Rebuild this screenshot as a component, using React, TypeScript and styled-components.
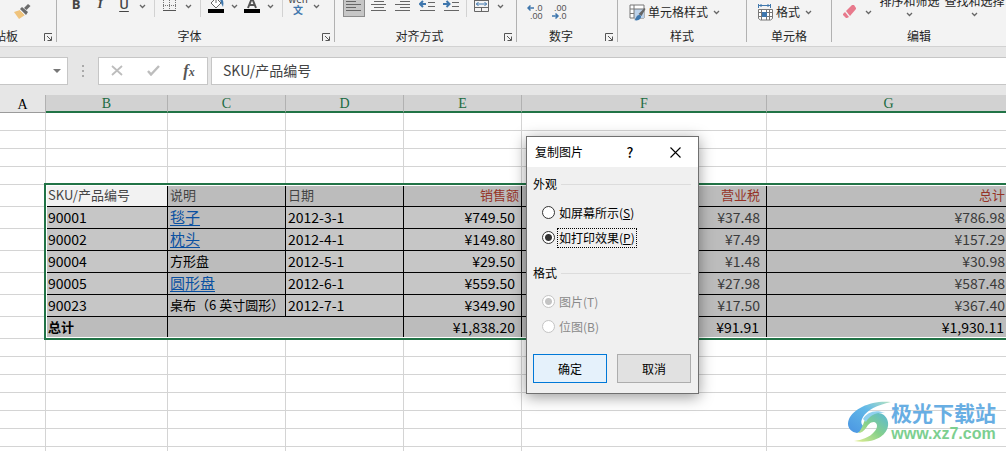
import React from "react";
import styled, { createGlobalStyle, css } from "styled-components";

const Global = createGlobalStyle`
  *, *::before, *::after { box-sizing: border-box; }
  body { margin: 0; background: #fff; overflow: hidden; }
  body, button, input { font-family: "Noto Sans CJK SC", sans-serif; font-size: 12px; color: #262626; }
`;

const Page = styled.main`
  position: relative;
  display: flex;
  flex-direction: column;
  height: 100vh;
  overflow: hidden;
`;

/* ---------- ribbon ---------- */

const Ribbon = styled.header`
  display: flex;
  height: 47px;
  overflow: hidden;
  background: #f3f3f3;
  border-bottom: 1px solid #d2d2d2;
`;

const Group = styled.section<{ $width?: number }>`
  display: flex;
  flex-direction: column;
  justify-content: flex-end;
  flex: ${(p) => (p.$width ? `0 0 ${p.$width}px` : "1 0 0")};
  min-width: 0;
  height: 42px;
  border-right: ${(p) => (p.$width ? "1px solid #b1b1b1" : "0")};
`;

const Controls = styled.div<{ $left: number; $bottom: number }>`
  display: flex;
  align-items: flex-end;
  height: 26px;
  padding-left: ${(p) => p.$left}px;
  padding-bottom: ${(p) => p.$bottom}px;
`;

const GroupFooter = styled.div`
  display: flex;
  align-items: flex-end;
  height: 16px;
`;

const GroupLabel = styled.span<{ $clipped?: boolean }>`
  flex: 1;
  height: 16px;
  line-height: 19px;
  white-space: nowrap;
  text-align: ${(p) => (p.$clipped ? "left" : "center")};
  margin-left: ${(p) => (p.$clipped ? "-18px" : "0")};
`;

const plainButton = css`
  border: 0;
  padding: 0;
  background: transparent;
`;

const LauncherButton = styled.button`
  ${plainButton}
  display: flex;
  align-items: flex-end;
  justify-content: flex-start;
  width: 12px;
  height: 16px;
`;

const Tool = styled.button<{ $pressed?: boolean }>`
  ${plainButton}
  display: flex;
  align-items: center;
  justify-content: center;
  flex: none;
  width: 24px;
  height: 22px;
  ${(p) =>
    p.$pressed &&
    css`
      width: 22px;
      margin-right: 2px;
      background: #c6c6c6;
      border: 1px solid #8c8c8c;
    `}
`;

const TextTool = styled.button`
  ${plainButton}
  display: flex;
  align-items: center;
  gap: 2px;
  height: 22px;
  margin-right: 2px;
  line-height: 22px;
  white-space: nowrap;
`;

const StackTools = styled.div`
  display: flex;
  margin-left: 3px;
  padding-bottom: 6px;
`;

const StackTool = styled.button`
  ${plainButton}
  display: flex;
  flex-direction: column;
  align-items: center;
  gap: 3px;
  flex: none;
  width: 65px;
  line-height: 16px;
  white-space: nowrap;
`;

const Drop = styled.button`
  ${plainButton}
  display: flex;
  align-items: center;
  justify-content: center;
  flex: none;
  width: 12px;
  height: 22px;
`;

const Divider = styled.span<{ $tight?: boolean }>`
  flex: none;
  width: 1px;
  height: 22px;
  margin: 0 3px 0 ${(p) => (p.$tight ? 3 : 6)}px;
  background: #d2d2d2;
`;

const Letter = styled.span<{ $kind?: "bold" | "italic" | "underline" }>`
  font-family: "Open Sans", sans-serif;
  font-size: 13px;
  line-height: 16px;
  font-weight: 700;
  color: #444;
  padding-bottom: 4px;
  ${(p) => p.$kind === "italic" && 'font-family: "Liberation Serif", serif; font-style: italic;'}
  ${(p) => p.$kind === "underline" && "font-weight: 600; text-decoration: underline; text-underline-offset: 2px;"}
`;

const Chevron = () => (
  <svg width="7" height="5" viewBox="0 0 7 5" aria-hidden="true">
    <path d="M1 1l2.5 2.5L6 1" fill="none" stroke="#666" strokeWidth="1.3" />
  </svg>
);

const Launcher = ({ label }: { label: string }) => (
  <LauncherButton aria-label={label}>
    <svg width="9" height="9" viewBox="0 0 9 9" aria-hidden="true">
      <path d="M.5 8V.5H8M3 3l4 4M7.5 3.5v4h-4" fill="none" stroke="#555" />
    </svg>
  </LauncherButton>
);

const BrushIcon = () => (
  <svg width="17" height="15" viewBox="0 0 17 15" aria-hidden="true">
    <path d="M0 8l6-2 5 5-6 4z" fill="#efc37c" />
    <path d="M6 5l2-2 6 5-2 3z" fill="#6b6b6b" />
    <path d="M10 4l4-4 2.5 2-4 4z" fill="#6b6b6b" />
    <path d="M6 6l5 5" stroke="#f3f3f3" />
  </svg>
);

const BorderIcon = () => (
  <svg width="14" height="16" viewBox="0 0 14 16" aria-hidden="true">
    <path d="M.5 0v13M6.5 0v13M12.5 0v13M0 1.5h13M0 7.5h13" stroke="#777" strokeDasharray="1 1" fill="none" />
    <path d="M0 12.5h13" stroke="#555" />
  </svg>
);

const FillIcon = () => (
  <svg width="17" height="18" viewBox="0 0 17 18" aria-hidden="true">
    <path d="M3 6l5-5 5 5-5 5z" fill="#fff" stroke="#666" />
    <path d="M8 6V0" stroke="#666" />
    <path d="M12 2c3 0 4 2 3 8l-2-4z" fill="#3f77ad" />
    <path d="M0 12h16v4H0z" fill="#000" />
  </svg>
);

const FontColorIcon = () => (
  <svg width="17" height="18" viewBox="0 0 17 18" aria-hidden="true">
    <path d="M4 11L8 1l4 10M5.5 8h5" fill="none" stroke="#555" strokeWidth="2" />
    <path d="M0 12h16v4H0z" fill="#000" />
  </svg>
);

const Phonetic = styled.span`
  display: flex;
  flex-direction: column;
  align-items: center;
  padding-bottom: 4px;
  font-size: 10px;
  line-height: 11px;
  color: #444;
  b {
    font-weight: 700;
    color: #3f77ad;
  }
`;

const LinesIcon = ({ xs }: { xs: number[] }) => (
  <svg width="16" height="16" viewBox="0 0 16 16" aria-hidden="true">
    {xs.map((x, i) => (
      <path key={i} d={`M${x} ${i * 3 + 0.5}h${i % 2 ? 10 : 15}`} stroke="#666" />
    ))}
  </svg>
);

const IndentIcon = ({ right }: { right?: boolean }) => (
  <svg width="17" height="16" viewBox="0 0 17 16" aria-hidden="true">
    <path d="M9 .5h7M9 4.500h7M9 8.500h7M1 12.500h15" stroke="#666" />
    <path
      d={right ? "M0 6h6M3.500 3l3 3-3 3" : "M1 6h6M4 3L1 6l3 3"}
      fill="none"
      stroke="#3f77ad"
      strokeWidth="2"
    />
  </svg>
);

const MergeIcon = () => (
  <svg width="16" height="16" viewBox="0 0 16 16" aria-hidden="true">
    <path d="M.5 0v13.500h14V0M0 9.500h15M7.500 9.500v4M0 2.500h15" fill="none" stroke="#666" />
    <path d="M2 6h11M4.500 4l-2 2 2 2M10.500 4l2 2-2 2" fill="none" stroke="#3f77ad" />
  </svg>
);

const DecimalIcon = ({ more }: { more?: boolean }) => (
  <svg width="16" height="16" viewBox="0 0 16 16" aria-hidden="true" fontFamily="Liberation Sans" fontSize="9" fill="#555">
    <text x={more ? 8 : 3} y="7">{more ? ".0" : ".00"}</text>
    <text x={more ? 3 : 8} y="15">{more ? ".00" : ".0"}</text>
    <path
      d={more ? "M1 4h6M3.500 1.500L1 4l2.500 2.500" : "M1 12h6M4.500 9.500L7 12l-2.500 2.500"}
      fill="none"
      stroke="#3f77ad"
      strokeWidth="1.500"
    />
  </svg>
);

const CellStyleIcon = () => (
  <svg width="17" height="17" viewBox="0 0 17 17" aria-hidden="true">
    <path d="M1 1h14v13H1z" fill="#fff" stroke="#777" />
    <path d="M5 5h10v9H5z" fill="#bcd2ea" />
    <path d="M1 5h14M5 1v13M1 9.500h4" stroke="#777" fill="none" />
    <path d="M15.500 4l1 1-4 7-3-2z" fill="#666" />
    <path d="M5 16c2 0 2-5 5-5 2 0 3 2 1 4-1 1-3 2-6 1z" fill="#3f77ad" />
  </svg>
);

const FormatIcon = () => (
  <svg width="17" height="17" viewBox="0 0 17 17" aria-hidden="true">
    <path d="M1.500 0v4M13.500 0v4M2 1.500h11M4.500 0L3 1.500 4.500 3M10.500 0L12 1.500 10.500 3" stroke="#3f77ad" fill="none" />
    <path d="M1.500 5.500h14v9l-2 1.500h-10l-2-1.500zM1 8.500h14M1 12.500h14M4.500 5v11M9.500 5v11M12.500 5v11" fill="#fff" stroke="#777" />
    <path d="M5 8h5v5H5z" fill="#3f77ad" />
  </svg>
);

const EraserIcon = () => (
  <svg width="14" height="14" viewBox="0 0 14 14" aria-hidden="true">
    <path d="M9 0h2l2 3v1L7 11 3 6z" fill="#e8798c" />
    <path d="M2 7l4 5-2 1H3L0 10V9z" fill="#e8798c" />
  </svg>
);

/* ---------- formula bar ---------- */

const FormulaBar = styled.div`
  display: flex;
  flex: none;
  height: 48px;
  padding: 10px 0;
  background: #e6e6e6;
`;

const NameBox = styled.div`
  display: flex;
  align-items: center;
  width: 68px;
  background: #fff;
  border: 1px solid #c6c6c6;
  border-left: 0;
`;

const NameInput = styled.input`
  flex: 1;
  min-width: 0;
  border: 0;
  background: transparent;
`;

const NameDrop = styled.button`
  ${plainButton}
  display: flex;
  align-items: center;
  justify-content: center;
  width: 20px;
  height: 24px;
`;

const Grip = styled.span`
  display: flex;
  align-items: center;
  justify-content: center;
  width: 30px;
`;

const FormulaActions = styled.div`
  display: flex;
  align-items: center;
  justify-content: space-around;
  width: 110px;
  margin-right: 3px;
  background: #fff;
  border: 1px solid #c6c6c6;
`;

const ActionButton = styled.button`
  ${plainButton}
  width: 36px;
  height: 24px;
  font-family: "Liberation Serif", serif;
  font-size: 16px;
  line-height: 24px;
  font-style: italic;
  font-weight: 700;
  color: #555;
  small {
    font-size: 12px;
  }
`;

const FormulaInput = styled.input`
  flex: 1;
  min-width: 0;
  padding: 0 11px 3px;
  font-size: 14px;
  color: #444;
  background: #fff;
  border: 1px solid #c6c6c6;
  border-right: 0;
  border-radius: 0;
  outline: 0;
`;

/* ---------- sheet ---------- */

const SheetArea = styled.div`
  position: relative;
  flex: 1;
  min-height: 0;
  overflow: hidden;
`;

const Sheet = styled.table`
  width: calc(100% + 5px);
  table-layout: fixed;
  border-collapse: separate;
  border-spacing: 0;
`;

const ColumnHead = styled.th<{ $selected?: boolean }>`
  height: 18px;
  padding: 2px 0 0;
  font-family: "Liberation Serif", serif;
  font-size: 14px;
  line-height: 14px;
  font-weight: 400;
  color: ${(p) => (p.$selected ? "#1a6b41" : "#000")};
  background: ${(p) => (p.$selected ? "#d2d2d2" : "#e6e6e6")};
  border-right: 1px solid #b1b1b1;
  border-bottom: ${(p) => (p.$selected ? "2px solid #217346" : "1px solid #9b9b9b")};
`;

const Blank = styled.td<{ $tall?: boolean }>`
  height: ${(p) => (p.$tall ? 22 : 18)}px;
  padding: 0;
  border-right: 1px solid #d4d4d4;
  border-bottom: 1px solid #d4d4d4;
`;

type Tone = "active" | "light" | "dark";
const tones: Record<Tone, string> = { active: "#f2f2f2", light: "#c6c6c6", dark: "#bcbcbc" };

const Data = styled.td<{ $tone: Tone; $right?: number; $ink?: string; $number?: boolean; $bold?: boolean }>`
  height: 22px;
  padding: 0 ${(p) => p.$right ?? 0}px 1px 2px;
  font-size: ${(p) => (p.$number ? 14 : 13)}px;
  line-height: 18px;
  vertical-align: middle;
  font-weight: ${(p) => (p.$bold ? 700 : 400)};
  text-align: ${(p) => (p.$right === undefined ? "left" : "right")};
  white-space: nowrap;
  color: ${(p) => p.$ink ?? "#000"};
  background: ${(p) => tones[p.$tone]};
  border-right: 1px solid #000;
  border-bottom: 1px solid #000;
`;

const CellLink = styled.a`
  display: block;
  font-size: 15px;
  line-height: 18px;
  color: #0a50a1;
  text-decoration: underline;
  text-underline-offset: 2px;
`;

const Selection = styled.div`
  position: absolute;
  top: 88px;
  left: 44px;
  right: -8px;
  height: 157px;
  border: 2px solid #217346;
  box-shadow: inset 0 0 0 1px #fff;
  pointer-events: none;
`;

const columns = ["A", "B", "C", "D", "E", "F", "G"];
const widths = [46, 122, 118, 118, 118, 245];

const items = [
  { sku: "90001", name: "毯子", link: true, date: "2012-3-1", sales: "¥749.50", tax: "¥37.48", total: "¥786.98" },
  { sku: "90002", name: "枕头", link: true, date: "2012-4-1", sales: "¥149.80", tax: "¥7.49", total: "¥157.29" },
  { sku: "90004", name: "方形盘", link: false, date: "2012-5-1", sales: "¥29.50", tax: "¥1.48", total: "¥30.98" },
  { sku: "90005", name: "圆形盘", link: true, date: "2012-6-1", sales: "¥559.50", tax: "¥27.98", total: "¥587.48" },
  { sku: "90023", name: "桌布（6 英寸圆形）", link: false, date: "2012-7-1", sales: "¥349.90", tax: "¥17.50", total: "¥367.40" },
];

const BlankRows = ({ count }: { count: number }) => (
  <>
    {Array.from({ length: count }, (_, r) => (
      <tr key={r}>
        {columns.map((c) => (
          <Blank key={c} />
        ))}
      </tr>
    ))}
  </>
);

/* ---------- dialog ---------- */

const Dialog = styled.form`
  position: absolute;
  top: 136px;
  left: 526px;
  width: 173px;
  background: #f0f0f0;
  border: 1px solid #707070;
  box-shadow: 0 3px 14px rgba(0, 0, 0, 0.4);
  color: #000;
`;

const TitleBar = styled.div`
  display: flex;
  align-items: center;
  height: 30px;
  padding: 0 8px;
  background: #fff;
`;

const Title = styled.h2`
  flex: 1;
  margin: 0;
  font-size: 12px;
  line-height: 16px;
  font-weight: 400;
`;

const TitleButton = styled.button`
  ${plainButton}
  display: flex;
  align-items: center;
  justify-content: center;
  width: 30px;
  height: 24px;
  margin-left: 15px;
  font-size: 14px;
  font-weight: 500;
  color: #000;
`;

const DialogBody = styled.div`
  padding: 9px 7px 10px 6px;
`;

const Field = styled.fieldset`
  min-width: 0;
  margin: 0 0 15px;
  padding: 0;
  border: 0;
`;

const Legend = styled.legend`
  display: flex;
  align-items: center;
  gap: 4px;
  width: 100%;
  height: 16px;
  margin-bottom: 8px;
  padding: 0;
  line-height: 16px;
  &::after {
    content: "";
    flex: 1;
    height: 1px;
    background: #dcdcdc;
  }
`;

const Option = styled.label<{ $disabled?: boolean }>`
  display: flex;
  align-items: center;
  height: 25px;
  padding-left: 9px;
  color: ${(p) => (p.$disabled ? "#8a8a8a" : "#000")};
`;

const OptionText = styled.span<{ $focused?: boolean }>`
  padding: 0 1px;
  line-height: 18px;
  border: 1px dotted ${(p) => (p.$focused ? "#000" : "transparent")};
`;

const Radio = styled.input.attrs({ type: "radio" })`
  appearance: none;
  width: 13px;
  height: 13px;
  margin: 0 2px 0 0;
  border: 1px solid #333;
  border-radius: 50%;
  background: #fff;
  &:checked {
    background: radial-gradient(circle, #333 0 3px, #fff 4px);
  }
  &:disabled {
    border-color: #c4c4c4;
  }
  &:disabled:checked {
    background: radial-gradient(circle, #c4c4c4 0 3px, #fff 4px);
  }
`;

const Actions = styled.div`
  display: flex;
  gap: 10px;
`;

const PushButton = styled.button<{ $primary?: boolean }>`
  flex: 1;
  height: 29px;
  padding: 0;
  color: #000;
  background: ${(p) => (p.$primary ? "#e5f1fb" : "#e1e1e1")};
  border: 1px solid ${(p) => (p.$primary ? "#0078d7" : "#adadad")};
`;

/* ---------- watermark ---------- */

const Watermark = styled.div`
  position: absolute;
  right: 10px;
  bottom: 7px;
  display: flex;
  align-items: center;
`;

const Brand = styled.div`
  display: flex;
  flex-direction: column;
  align-items: center;
  font-weight: 700;
  white-space: nowrap;
  color: #68aee3;
  font-size: 21px;
  line-height: 24px;
`;

const Site = styled.span`
  font-family: "Liberation Sans", sans-serif;
  font-size: 16px;
  line-height: 20px;
  color: #7ccf90;
`;

const Swirl = () => (
  <svg width="43" height="42" viewBox="0 0 43 42" aria-hidden="true">
    <defs>
      <linearGradient id="wing" x1="0" y1="1" x2="1" y2="0">
        <stop offset="0" stopColor="#4a94e2" />
        <stop offset="0.6" stopColor="#62b9e8" />
        <stop offset="1" stopColor="#b6e3c0" />
      </linearGradient>
      <linearGradient id="tail" x1="0" y1="1" x2="1" y2="0">
        <stop offset="0" stopColor="#e6f092" />
        <stop offset="0.5" stopColor="#86d08a" />
        <stop offset="1" stopColor="#58b8d8" />
      </linearGradient>
    </defs>
    <path d="M43 1C24-1 6 7 1 18c-3 7 1 13 8 14 4-1 7-3 9-6-5-1-6-5-3-10C19 9 29 4 43 1z" fill="url(#wing)" />
    <path d="M18 17c5-7 17-7 21 1 4 9-3 18-13 21-6 2-13 2-20 1 8-1 16-4 20-9 4-4 4-9 0-10-4 0-6 3-8 6-2 3-5 5-8 5 4-3 5-10 8-15z" fill="url(#tail)" />
    <path d="M15 18C19 11 28 8 37 12c-8-1-15 2-19 9z" fill="#8fd0ee" />
  </svg>
);

export default function App() {
  return (
    <Page>
      <Global />
      <Ribbon>
        <Group $width={57}>
          <Controls $left={10} $bottom={4}>
            <Tool aria-label="格式刷"><BrushIcon /></Tool>
          </Controls>
          <GroupFooter>
            <GroupLabel $clipped>剪贴板</GroupLabel>
            <Launcher label="剪贴板设置" />
          </GroupFooter>
        </Group>

        <Group $width={278}>
          <Controls $left={7} $bottom={9}>
            <Tool aria-label="加粗"><Letter $kind="bold">B</Letter></Tool>
            <Tool aria-label="倾斜"><Letter $kind="italic">I</Letter></Tool>
            <Tool aria-label="下划线"><Letter $kind="underline">U</Letter></Tool>
            <Drop aria-label="下划线选项"><Chevron /></Drop>
            <Divider />
            <Tool aria-label="边框"><BorderIcon /></Tool>
            <Drop aria-label="边框选项"><Chevron /></Drop>
            <Divider />
            <Tool aria-label="填充颜色"><FillIcon /></Tool>
            <Drop aria-label="填充颜色选项"><Chevron /></Drop>
            <Tool aria-label="字体颜色"><FontColorIcon /></Tool>
            <Drop aria-label="字体颜色选项"><Chevron /></Drop>
            <Divider />
            <Tool aria-label="拼音"><Phonetic>wén<b>文</b></Phonetic></Tool>
            <Drop aria-label="拼音选项"><Chevron /></Drop>
          </Controls>
          <GroupFooter>
            <GroupLabel>字体</GroupLabel>
            <Launcher label="字体设置" />
          </GroupFooter>
        </Group>

        <Group $width={182}>
          <Controls $left={8} $bottom={9}>
            <Tool $pressed aria-label="左对齐"><LinesIcon xs={[0, 0, 0, 0, 0]} /></Tool>
            <Tool aria-label="居中"><LinesIcon xs={[0, 3, 0, 3, 0]} /></Tool>
            <Tool aria-label="右对齐"><LinesIcon xs={[0, 5, 0, 5, 0]} /></Tool>
            <Tool aria-label="减少缩进"><IndentIcon /></Tool>
            <Tool aria-label="增加缩进"><IndentIcon right /></Tool>
            <Divider $tight />
            <Tool aria-label="合并"><MergeIcon /></Tool>
            <Drop aria-label="合并选项"><Chevron /></Drop>
          </Controls>
          <GroupFooter>
            <GroupLabel>对齐方式</GroupLabel>
            <Launcher label="对齐设置" />
          </GroupFooter>
        </Group>

        <Group $width={101}>
          <Controls $left={6} $bottom={3}>
            <Tool aria-label="增加小数位数"><DecimalIcon more /></Tool>
            <Tool aria-label="减少小数位数"><DecimalIcon /></Tool>
          </Controls>
          <GroupFooter>
            <GroupLabel>数字</GroupLabel>
            <Launcher label="数字设置" />
          </GroupFooter>
        </Group>

        <Group $width={129}>
          <Controls $left={11} $bottom={3}>
            <TextTool><CellStyleIcon />单元格样式</TextTool>
            <Drop aria-label="样式选项"><Chevron /></Drop>
          </Controls>
          <GroupFooter><GroupLabel>样式</GroupLabel></GroupFooter>
        </Group>

        <Group $width={85}>
          <Controls $left={10} $bottom={3}>
            <TextTool><FormatIcon />格式</TextTool>
            <Drop aria-label="格式选项"><Chevron /></Drop>
          </Controls>
          <GroupFooter><GroupLabel>单元格</GroupLabel></GroupFooter>
        </Group>

        <Group>
          <Controls $left={6} $bottom={3}>
            <Tool aria-label="清除"><EraserIcon /></Tool>
            <Drop aria-label="清除选项"><Chevron /></Drop>
            <StackTools>
              <StackTool>排序和筛选<Chevron /></StackTool>
              <StackTool>查找和选择<Chevron /></StackTool>
            </StackTools>
          </Controls>
          <GroupFooter><GroupLabel>编辑</GroupLabel></GroupFooter>
        </Group>
      </Ribbon>

      <FormulaBar>
        <NameBox>
          <NameInput aria-label="名称框" />
          <NameDrop aria-label="名称列表">
            <svg width="8" height="4" viewBox="0 0 8 4" aria-hidden="true">
              <path d="M0 0h8L4 4z" fill="#777" />
            </svg>
          </NameDrop>
        </NameBox>
        <Grip>
          <svg width="2" height="12" viewBox="0 0 2 12" aria-hidden="true">
            <path d="M0 0h2v2H0zM0 5h2v2H0zM0 10h2v2H0z" fill="#aaa" />
          </svg>
        </Grip>
        <FormulaActions>
          <ActionButton aria-label="取消输入">
            <svg width="12" height="11" viewBox="0 0 12 11" aria-hidden="true">
              <path d="M1 1l10 9M11 1L1 10" stroke="#bdbdbd" strokeWidth="1.800" />
            </svg>
          </ActionButton>
          <ActionButton aria-label="输入">
            <svg width="13" height="11" viewBox="0 0 13 11" aria-hidden="true">
              <path d="M1 6l3 3.500L12 1" stroke="#bdbdbd" strokeWidth="2.400" fill="none" />
            </svg>
          </ActionButton>
          <ActionButton aria-label="插入函数">f<small>x</small></ActionButton>
        </FormulaActions>
        <FormulaInput aria-label="编辑栏" defaultValue="SKU/产品编号" />
      </FormulaBar>

      <SheetArea>
        <Sheet>
          <colgroup>
            {widths.map((w, i) => (
              <col key={i} width={w} />
            ))}
            <col />
          </colgroup>
          <thead>
            <tr>
              {columns.map((c, i) => (
                <ColumnHead key={c} $selected={i > 0} scope="col">{c}</ColumnHead>
              ))}
            </tr>
          </thead>
          <tbody>
            <BlankRows count={4} />
            <tr>
              <Blank $tall />
              <Data $tone="active" $ink="#444">SKU/产品编号</Data>
              <Data $tone="dark" $ink="#444">说明</Data>
              <Data $tone="dark" $ink="#444">日期</Data>
              <Data $tone="dark" $ink="#953326" $right={2}>销售额</Data>
              <Data $tone="dark" $ink="#953326" $right={6}>营业税</Data>
              <Data $tone="dark" $ink="#953326" $right={5}>总计</Data>
            </tr>
            {items.map((it) => (
              <tr key={it.sku}>
                <Blank $tall />
                <Data $tone="light" $number>{it.sku}</Data>
                <Data $tone="dark">{it.link ? <CellLink href="#">{it.name}</CellLink> : it.name}</Data>
                <Data $tone="light" $number>{it.date}</Data>
                <Data $tone="light" $number $right={6}>{it.sales}</Data>
                <Data $tone="dark" $number $ink="#3a3a3a" $right={6}>{it.tax}</Data>
                <Data $tone="dark" $number $ink="#3a3a3a" $right={5}>{it.total}</Data>
              </tr>
            ))}
            <tr>
              <Blank $tall />
              <Data $tone="dark" $bold>总计</Data>
              <Data $tone="dark" colSpan={2} />
              <Data $tone="dark" $number $right={6}>¥1,838.20</Data>
              <Data $tone="dark" $number $right={7}>¥91.91</Data>
              <Data $tone="dark" $number $right={6}>¥1,930.11</Data>
            </tr>
            <BlankRows count={7} />
          </tbody>
        </Sheet>
        <Selection />
      </SheetArea>

      <Watermark>
        <Swirl />
        <Brand>
          极光下载站
          <Site>www.xz7.com</Site>
        </Brand>
      </Watermark>

      <Dialog role="dialog" aria-label="复制图片" onSubmit={(e) => e.preventDefault()}>
        <TitleBar>
          <Title>复制图片</Title>
          <TitleButton type="button" aria-label="帮助">?</TitleButton>
          <TitleButton type="button" aria-label="关闭">
            <svg width="11" height="11" viewBox="0 0 11 11" aria-hidden="true">
              <path d="M.5.5l10 10M10.500.5l-10 10" stroke="#000" strokeWidth="1.100" />
            </svg>
          </TitleButton>
        </TitleBar>
        <DialogBody>
          <Field>
            <Legend>外观</Legend>
            <Option>
              <Radio name="look" />
              <OptionText>如屏幕所示(<u>S</u>)</OptionText>
            </Option>
            <Option>
              <Radio name="look" defaultChecked />
              <OptionText $focused>如打印效果(<u>P</u>)</OptionText>
            </Option>
          </Field>
          <Field>
            <Legend>格式</Legend>
            <Option $disabled>
              <Radio name="kind" disabled defaultChecked />
              <OptionText>图片(T)</OptionText>
            </Option>
            <Option $disabled>
              <Radio name="kind" disabled />
              <OptionText>位图(B)</OptionText>
            </Option>
          </Field>
          <Actions>
            <PushButton $primary type="submit">确定</PushButton>
            <PushButton type="button">取消</PushButton>
          </Actions>
        </DialogBody>
      </Dialog>
    </Page>
  );
}
